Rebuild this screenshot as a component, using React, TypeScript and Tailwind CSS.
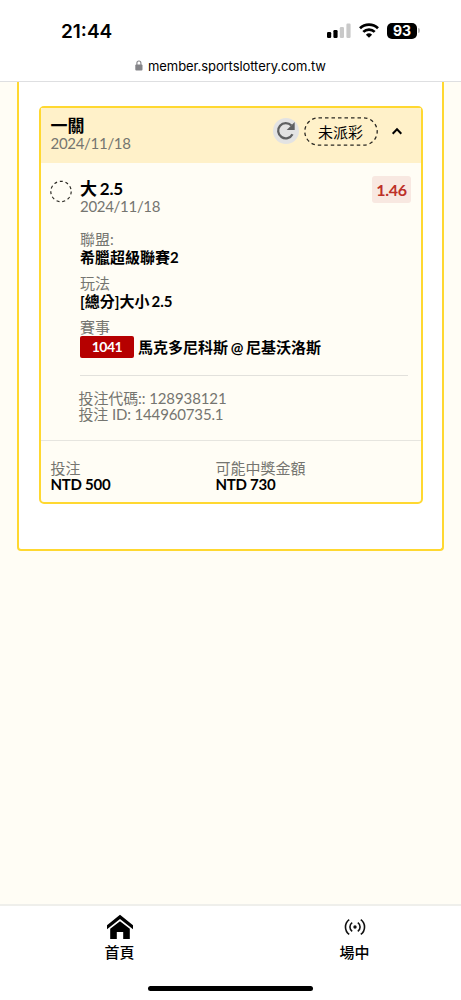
import type { ReactNode } from 'react'

function StatusBar() {
  return (
    <div className="flex h-[56px] items-start justify-between pt-[20px] pr-[41px] pl-[61px]">
      <div className="font-['Inter','Liberation_Sans',sans-serif] text-[19px] leading-[23px] font-semibold">
        21:44
      </div>
      <div className="flex items-center gap-[8px] pt-[2px]">
        <svg width="24" height="17" viewBox="0 0 24 17">
          <rect x="0" y="10" width="4.2" height="6" rx="1.2" fill="#000" />
          <rect x="6.4" y="8" width="4.2" height="8" rx="1.2" fill="#000" />
          <rect x="12.8" y="5" width="4.2" height="11" rx="1.2" fill="#c9c9c9" />
          <rect x="19.4" y="1.5" width="4.2" height="14.5" rx="1.2" fill="#c9c9c9" />
        </svg>
        <svg width="20" height="15" viewBox="0 0 20 15" fill="none" stroke="#000" strokeWidth="2.7">
          <path d="M1 5.2a12.9 12.9 0 0 1 18 0" />
          <path d="M4.3 8.9a8.1 8.1 0 0 1 11.4 0" />
          <path d="M10 14.8 6.9 11.7a4.5 4.5 0 0 1 6.2 0z" fill="#000" stroke="none" />
        </svg>
        <div className="flex items-center gap-[1px]">
          <div className="flex h-[16px] w-[30px] items-center justify-center rounded-[5px] bg-black font-['Inter','Liberation_Sans',sans-serif] text-[14px] leading-[16px] font-bold text-white">
            93
          </div>
          <div className="h-[5px] w-[2px] rounded-r-full bg-[#bdbdbd]" />
        </div>
      </div>
    </div>
  )
}

function AddressBar() {
  return (
    <div className="flex h-[26px] justify-center gap-[5px] border-b border-[#dedfe1]">
      <svg className="mt-[4px]" width="8" height="11" viewBox="0 0 8 11">
        <rect x="0.3" y="4.6" width="7.2" height="6" rx="1" fill="#848488" />
        <path d="M1.9 5V3a2 2 0 0 1 4 0v2" fill="none" stroke="#848488" strokeWidth="1.1" />
      </svg>
      <span className="font-['Inter','Liberation_Sans',sans-serif] text-[13px] leading-[20px] tracking-[-0.08px]">
        member.sportslottery.com.tw
      </span>
    </div>
  )
}

function Field({ label, children }: { label: string; children: ReactNode }) {
  return (
    <div className="mb-[8px]">
      <div className="h-[18px] text-[#757570]">{label}</div>
      <div className="h-[18px] font-bold [word-spacing:-1.5px]">{children}</div>
    </div>
  )
}

function BetCard() {
  return (
    <div className="h-[398px] rounded-[5px] border-2 border-[#ffd830] bg-[#fffdf5]">
      {/* Header */}
      <div className="flex h-[55px] items-start bg-[#fff1c9] pl-[10px]">
        <div className="w-[222px] pt-[9px]">
          <div className="h-[18px] text-[17px] font-bold">一關</div>
          <div className="h-[18px] leading-[17px] tracking-[-0.3px] text-[#757570]">2024/11/18</div>
        </div>
        <div className="mt-[10px] flex size-[26px] items-center justify-center rounded-full bg-[#e3e3e3]">
          <svg width="20" height="20" viewBox="0 0 20 20">
            <path d="M16.5 13.2A7.6 7.6 0 1 1 15.4 4.6" fill="none" stroke="#5f6061" strokeWidth="2.3" />
            <path d="M18.7 1v8h-8z" fill="#5f6061" />
          </svg>
        </div>
        <div className="relative mt-[9px] ml-[5px] h-[29px] w-[74px] text-center leading-[30px]">
          <svg className="absolute inset-0" width="74" height="29" viewBox="0 0 74 29">
            <rect x="0.8" y="0.8" width="72.4" height="27.4" rx="13.7" fill="none" stroke="#2a2822" strokeWidth="1.3" strokeDasharray="3.5 3" />
          </svg>
          未派彩
        </div>
        <svg className="mt-[18px] ml-[13px]" width="12" height="10" viewBox="0 0 12 10">
          <path d="M1.7 7.7 6 3.3l4.3 4.4" fill="none" stroke="#000" strokeWidth="2" />
        </svg>
      </div>

      {/* Selection */}
      <div className="flex h-[278px] border-b border-[#e6e5df] pl-[9px]">
        <svg className="mt-[17px]" width="22" height="23" viewBox="0.5 0 22 23">
          <circle cx="11.5" cy="11.5" r="10.2" fill="none" stroke="#2a2822" strokeWidth="1.2" strokeDasharray="3 2.82" />
        </svg>
        <div className="ml-[8.5px] w-[328px] pt-[17px]">
          <div className="flex justify-between">
            <div>
              <div className="h-[18px] text-[17px] font-bold tracking-[-0.2px] [word-spacing:-1px]">大 2.5</div>
              <div className="h-[18px] leading-[17px] tracking-[-0.3px] text-[#757570]">2024/11/18</div>
            </div>
            <div className="mt-[-4px] mr-[-3px] h-[27px] w-[39px] rounded-[3px] bg-[#f8e8e1] text-center text-[16px] leading-[27px] font-bold tracking-[-0.3px] text-[#bd3028]">
              1.46
            </div>
          </div>
          <div className="mt-[14px]">
            <Field label="聯盟:">希臘超級聯賽2</Field>
            <Field label="玩法">[總分]大小 2.5</Field>
            <div className="h-[18px] text-[#757570]">賽事</div>
            <div className="flex h-[22px] items-center gap-[4px] font-bold">
              <span className="h-[22px] w-[54px] rounded-[2px] bg-[#b60000] text-center text-[14px] leading-[22px] tracking-[-0.5px] text-white">1041</span>
              <span className="leading-[22px] [word-spacing:-1px]">馬克多尼科斯 @ 尼基沃洛斯</span>
            </div>
          </div>
          <div className="mt-[17px] border-t border-[#e2e1dc] pt-[14px] text-[#757570]">
            <div className="-ml-[1.5px] h-[16px] leading-[16px] tracking-[-0.1px]">投注代碼:: 128938121</div>
            <div className="-ml-[1.5px] h-[16px] leading-[16px] tracking-[-0.15px]">投注 ID: 144960735.1</div>
          </div>
        </div>
      </div>

      {/* Stake and payout */}
      <div className="flex pt-[19px] pl-[10px] leading-[16px]">
        <div className="w-[165px]">
          <div className="h-[16px] text-[#757570]">投注</div>
          <div className="font-bold tracking-[-0.25px]">NTD 500</div>
        </div>
        <div>
          <div className="h-[16px] text-[#757570]">可能中獎金額</div>
          <div className="font-bold tracking-[-0.25px]">NTD 730</div>
        </div>
      </div>
    </div>
  )
}

function BottomNav() {
  return (
    <div className="flex h-[96px] flex-col items-center border-t-2 border-[#efefeb] bg-white">
      <div className="flex h-[78px] w-full text-center">
        <div className="flex w-[239px] flex-col items-center pt-[8px]">
          <svg width="28" height="26" viewBox="0 0 28 26">
            <path d="M14 0.8 27 11.2V15.3L14 4.9 1 15.3V11.2z" />
            <path d="M14 7.2 23.8 14.8V25H17.2V18H10.8V25H4.2V14.8z" />
          </svg>
          <span className="mt-[3px] font-medium leading-[18px]">首頁</span>
        </div>
        <div className="flex flex-1 flex-col items-center pt-[11px] pl-[9px]">
          <svg width="22" height="20" viewBox="0 0 22 20" fill="none" stroke="#111" strokeWidth="1.6">
            <circle cx="11" cy="10" r="1.7" fill="#111" stroke="none" />
            <path d="M8.2 5.7a5.2 5.2 0 0 0 0 8.6M13.8 5.7a5.2 5.2 0 0 1 0 8.6" />
            <path d="M5.2 2.6a9.2 9.2 0 0 0 0 14.8M16.8 2.6a9.2 9.2 0 0 1 0 14.8" />
          </svg>
          <span className="mt-[6px] font-medium leading-[18px]">場中</span>
        </div>
      </div>
      <div className="mt-[2px] h-[5px] w-[165px] rounded-full bg-black" />
    </div>
  )
}

export default function App() {
  return (
    <div className="flex h-[1000px] w-[461px] flex-col overflow-hidden bg-white font-['Lato','Noto_Sans_CJK_TC',sans-serif] text-[15px] leading-[18px] text-black">
      <StatusBar />
      <AddressBar />
      <div className="flex-1 bg-[#fffdf5] pr-[17px] pl-[17px]">
        <div className="h-[469px] rounded-b-[4px] border-2 border-t-0 border-[#ffd830] bg-white pt-[24px] pr-[19.5px] pl-[19.5px]">
          <BetCard />
        </div>
      </div>
      <BottomNav />
    </div>
  )
}
